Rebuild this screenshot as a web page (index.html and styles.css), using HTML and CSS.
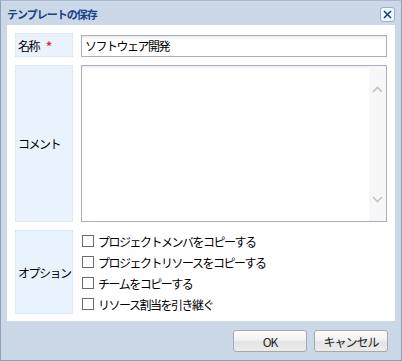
FILE: index.html
```html
<!DOCTYPE html>
<html lang="ja">
<head>
<meta charset="utf-8">
<link rel="stylesheet" href="styles.css">
</head>
<body>
<div class="window">
  <div class="titlebar">
    <span class="title">テンプレートの保存</span>
    <span class="close"><svg width="9" height="9" viewBox="0 0 9 9"><path d="M1 1L8 8M8 1L1 8" stroke="#15428b" stroke-width="1.6"/></svg></span>
  </div>
  <div class="panel">
    <div class="row row-name">
      <div class="label">名称 <span class="req">*</span></div>
      <div class="field"><div class="input">ソフトウェア開発</div></div>
    </div>
    <div class="row row-comment">
      <div class="label">コメント</div>
      <div class="field">
        <div class="textarea">
          <div class="ta-body"></div>
          <div class="scroll">
            <svg width="11" height="7" viewBox="0 0 11 7"><path d="M1 6L5.5 1.5L10 6" fill="none" stroke="#c3c3c3" stroke-width="1.6"/></svg>
            <svg width="11" height="7" viewBox="0 0 11 7"><path d="M1 1L5.5 5.5L10 1" fill="none" stroke="#c3c3c3" stroke-width="1.6"/></svg>
          </div>
        </div>
      </div>
    </div>
    <div class="row row-option">
      <div class="label">オプション</div>
      <div class="field options">
        <label class="opt"><span class="cb"></span>プロジェクトメンバをコピーする</label>
        <label class="opt"><span class="cb"></span>プロジェクトリソースをコピーする</label>
        <label class="opt"><span class="cb"></span>チームをコピーする</label>
        <label class="opt"><span class="cb"></span>リソース割当を引き継ぐ</label>
      </div>
    </div>
  </div>
  <div class="footer">
    <button class="btn">OK</button>
    <button class="btn">キャンセル</button>
  </div>
</div>
</body>
</html>
```

FILE: styles.css
```css
html, body {
  margin: 0;
  padding: 0;
}
body {
  width: 402px;
  height: 361px;
  font-family: "Noto Sans CJK JP", "Noto Sans", sans-serif;
  font-size: 12px;
  color: #000;
}
.window {
  box-sizing: border-box;
  width: 402px;
  height: 361px;
  border: 1px solid #8e9fb8;
  border-top-color: #a9b8cc;
  background: #cbd8e8;
  display: flex;
  flex-direction: column;
}
.titlebar {
  height: 24px;
  display: flex;
  align-items: center;
  justify-content: space-between;
  padding: 0 6px 0 6px;
}
.title {
  font-weight: bold;
  font-size: 11px;
  letter-spacing: -1px;
  color: #15428b;
  line-height: 1;
  margin-top: 2px;
}
.close {
  box-sizing: border-box;
  width: 15px;
  height: 15px;
  border: 1px solid #8fb0e0;
  border-radius: 3px;
  background: #f4f8fd;
  display: flex;
  align-items: center;
  justify-content: center;
  margin-top: 2px;
}
.panel {
  margin: 0 6px;
  height: 296px;
  box-sizing: border-box;
  background: #fff;
  padding: 8px 8px 0 8px;
  display: flex;
  flex-direction: column;
  gap: 8px;
}
.row {
  display: grid;
  grid-template-columns: 58px 1fr;
  column-gap: 8px;
}
.row-name { height: 24px; }
.row-comment { height: 157px; }
.row-option { height: 84px; }
.label {
  box-sizing: border-box;
  background: #eaf2fd;
  border: 1px dotted #d3e1f3;
  display: flex;
  align-items: center;
  padding-left: 2px;
  letter-spacing: -1.5px;
  white-space: nowrap;
}
.req {
  color: #e0262b;
  margin-left: 7px;
  font-weight: bold;
}
.row-name .field {
  display: flex;
  align-items: flex-end;
}
.input {
  box-sizing: border-box;
  width: 100%;
  height: 22px;
  border: 1px solid #a9afc2;
  background: linear-gradient(#e6e6e6, #fff 3px);
  padding: 0 3px;
  line-height: 20px;
  letter-spacing: -1.5px;
}
.textarea {
  box-sizing: border-box;
  height: 157px;
  border: 1px solid #a9afc2;
  display: flex;
  background: #fff;
}
.ta-body {
  flex: 1;
  background: linear-gradient(#ececec, #fff 3px);
}
.scroll {
  width: 17px;
  background: #f7f7f7;
  display: flex;
  flex-direction: column;
  justify-content: space-between;
  align-items: center;
  padding: 20px 0 18px;
}
.options {
  display: flex;
  flex-direction: column;
  justify-content: center;
  gap: 8px;
  padding-top: 1px;
}
.opt {
  display: flex;
  align-items: center;
  height: 13px;
  letter-spacing: -1.5px;
  white-space: nowrap;
}
.cb {
  box-sizing: border-box;
  width: 12px;
  height: 12px;
  border: 1px solid #6b6b6b;
  background: #fff;
  margin-left: 1px;
  margin-right: 4px;
  flex: none;
}
.footer {
  flex: 1;
  display: flex;
  justify-content: flex-end;
  align-items: center;
  gap: 7px;
  padding-right: 13px;
  padding-top: 1px;
}
.btn {
  box-sizing: border-box;
  width: 74px;
  height: 22px;
  border: 1px solid #a8a8a8;
  border-radius: 3px;
  background: linear-gradient(#fdfdfd 0%, #f2f2f2 45%, #e4e4e4 55%, #ececec 100%);
  font-family: "Noto Sans CJK JP", "Noto Sans", sans-serif;
  font-size: 12px;
  color: #222;
  padding: 0;
  letter-spacing: -1px;
}
```
